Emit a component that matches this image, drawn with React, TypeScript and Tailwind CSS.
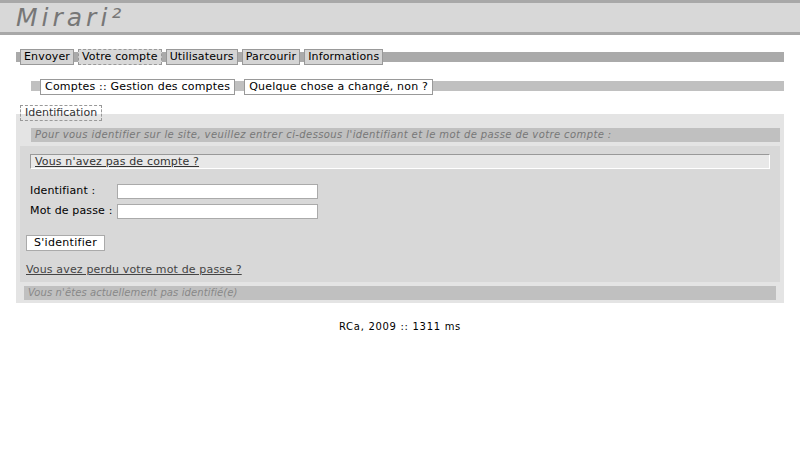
export default function App() {
  const tabs = [
    { label: "Envoyer", active: false },
    { label: "Votre compte", active: true },
    { label: "Utilisateurs", active: false },
    { label: "Parcourir", active: false },
    { label: "Informations", active: false },
  ];
  const subTabs = ["Comptes :: Gestion des comptes", "Quelque chose a changé, non ?"];

  return (
    <div className="min-h-[450px] bg-white font-['DejaVu_Sans',Verdana,sans-serif] text-[11px] tracking-[0.15px] text-black">
      <header className="h-[35px] border-y-[3px] border-[#a8a8a8] bg-[#d8d8d8] pl-[16px]">
        <h1 className="text-[25px] italic leading-[29px] tracking-[4px] text-[#777]">Mirari²</h1>
      </header>

      <main className="mx-4">
        <nav className="mt-[14px] flex h-[16px] gap-[4px] bg-[linear-gradient(to_bottom,transparent_3px,#aaa_3px,#aaa_13px,transparent_13px)] pl-[4px]">
          {tabs.map((t) => (
            <span
              key={t.label}
              className={
                t.active
                  ? "h-[16px] border border-dashed border-[#999] bg-[#d8d8d8] px-[3px] leading-[14px] tracking-[0.15px]"
                  : "h-[16px] border border-[#999] bg-[#d4d4d4] px-[3px] leading-[14px] tracking-[0.15px]"
              }
            >
              {t.label}
            </span>
          ))}
        </nav>

        <nav className="mt-[14px] ml-[15px] flex h-[16px] gap-[9px] bg-[linear-gradient(to_bottom,transparent_2px,#c0c0c0_2px,#c0c0c0_12px,transparent_12px)] pl-[9px]">
          {subTabs.map((s) => (
            <span key={s} className="h-[16px] border border-[#999] bg-white px-[4px] leading-[14px] tracking-[0.2px]">
              {s}
            </span>
          ))}
        </nav>

        <section className="mt-[10px]">
          <div className="relative z-10 ml-[4px] inline-block h-[16px] border border-dashed border-[#999] px-[4px] leading-[14px] tracking-normal text-[#333]">
            Identification
          </div>
          <div className="-mt-[8px] bg-[#e4e4e4] pb-[3px] pt-[14px]">
            <p className="ml-[15px] mr-[4px] h-[14px] bg-[#c0c0c0] pl-[4px] text-[10px] italic leading-[14px] tracking-[0.4px] text-[#777]">
              Pour vous identifier sur le site, veuillez entrer ci-dessous l'identifiant et le mot de passe de votre compte :
            </p>

            <div className="mx-[4px] mt-[4px] h-[136px] bg-[#d8d8d8] pt-[8px]">
              <div className="mx-[10px] h-[15px] border border-b-white border-l-[#999] border-r-white border-t-[#999] bg-[#e8e8e8] pl-[4px] leading-[13px] text-[#333]">
                <a href="#" className="underline">Vous n'avez pas de compte ?</a>
              </div>

              <div className="mt-[15px] flex flex-col gap-[5px] pl-[10px]">
                <label className="flex h-[15px] items-center">
                  <span className="w-[87px]">Identifiant :</span>
                  <input type="text" className="h-[15px] w-[201px] border border-[#aaa] bg-white" />
                </label>
                <label className="flex h-[15px] items-center">
                  <span className="w-[87px]">Mot de passe :</span>
                  <input type="password" className="h-[15px] w-[201px] border border-[#aaa] bg-white" />
                </label>
              </div>

              <button className="ml-[6px] mt-[16px] block h-[16px] w-[79px] border border-[#aaa] bg-white leading-[14px] tracking-[0.3px]">
                S'identifier
              </button>

              <a href="#" className="ml-[6px] mt-[12px] block leading-[14px] text-[#444] underline">
                Vous avez perdu votre mot de passe ?
              </a>
            </div>

            <p className="mx-[8px] mt-[4px] h-[14px] bg-[#c0c0c0] pl-[4px] text-[10px] italic leading-[14px] tracking-[0.1px] text-[#888]">
              Vous n'êtes actuellement pas identifié(e)
            </p>
          </div>
        </section>

        <footer className="mt-[18px] text-center text-[10px] leading-[12px] tracking-[0.7px]">RCa, 2009 :: 1311 ms</footer>
      </main>
    </div>
  );
}
